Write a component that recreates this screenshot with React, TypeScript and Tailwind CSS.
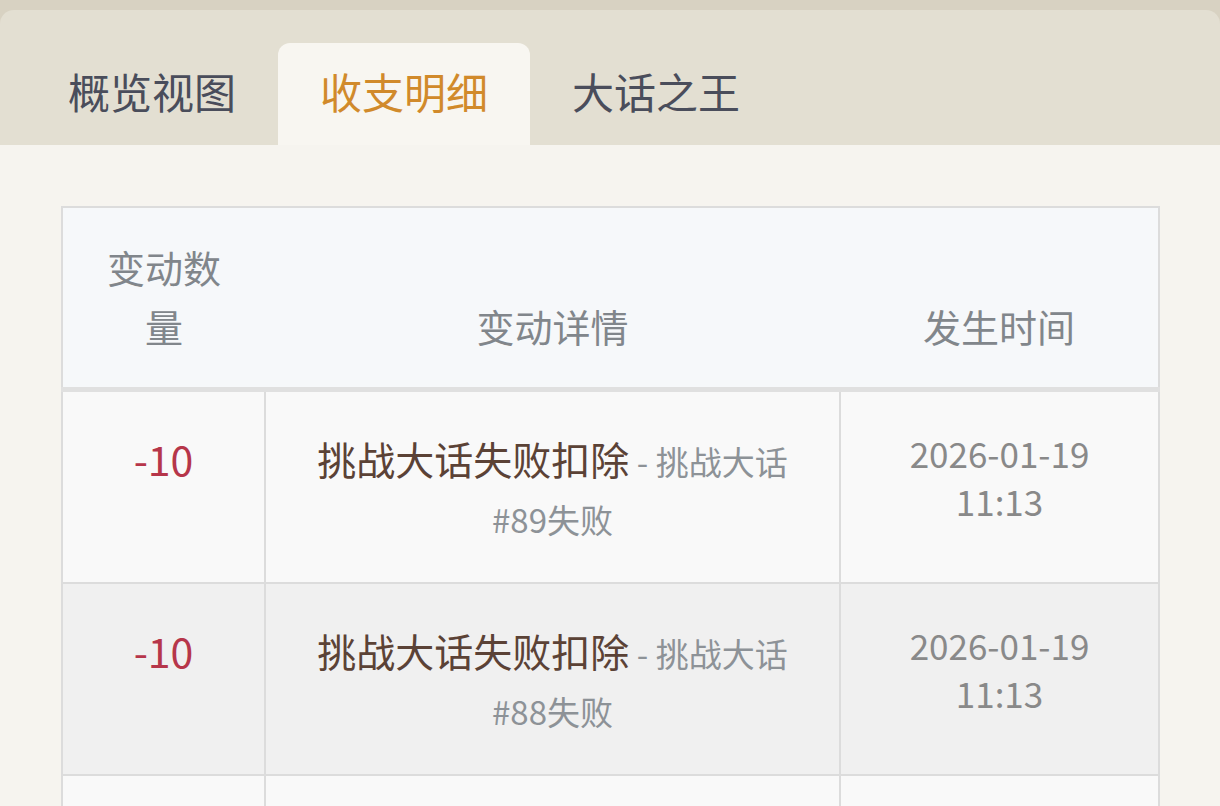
import React from "react";

const rows = [
  { amount: "-10", title: "挑战大话失败扣除", note: "挑战大话 #89失败", date: "2026-01-19", time: "11:13" },
  { amount: "-10", title: "挑战大话失败扣除", note: "挑战大话 #88失败", date: "2026-01-19", time: "11:13" },
  { amount: "-10", title: "挑战大话失败扣除", note: "挑战大话 #87失败", date: "2026-01-19", time: "11:13" },
];

const tabs = ["概览视图", "收支明细", "大话之王"];

export default function App() {
  return (
    <div
      className="h-[806px] w-[1220px] overflow-hidden bg-[#d8d2c2] pt-[10px]"
      style={{ fontFamily: '"Noto Sans CJK SC", "Noto Sans", sans-serif' }}
    >
      <div className="rounded-t-[14px] bg-[#e3dfd2] h-full flex flex-col">
        {/* tabs */}
        <div className="flex pl-[26px] pt-[33px] h-[135px] shrink-0">
          {tabs.map((t, i) => (
            <div
              key={t}
              className={
                i === 1
                  ? "w-[252px] flex items-center justify-center rounded-t-[12px] bg-[#f8f6f1] text-[42px] text-[#d18a2b] pb-[8px]"
                  : "w-[252px] flex items-center justify-center text-[42px] text-[#4a4d5b] pb-[8px]"
              }
            >
              {t}
            </div>
          ))}
        </div>

        {/* content */}
        <div className="flex-1 bg-[#f6f4ef] px-[61px] pt-[61px]">
          <table className="w-[1097px] border-collapse table-fixed border-2 border-[#dcdcdc]">
            <colgroup>
              <col className="w-[203px]" />
              <col className="w-[575px]" />
              <col className="w-[319px]" />
            </colgroup>
            <thead>
              <tr className="bg-[#f6f8fa] border-b-[5px] border-[#e0e0e0] h-[182px]">
                <th className="align-bottom px-[38px] pb-[32px] text-[38px] leading-[59px] font-normal text-[#81868b]">
                  变动数量
                </th>
                <th className="align-bottom px-[38px] pb-[32px] text-[38px] leading-[59px] font-normal text-[#81868b]">
                  变动详情
                </th>
                <th className="align-bottom px-[38px] pb-[32px] text-[38px] leading-[59px] font-normal text-[#81868b]">
                  发生时间
                </th>
              </tr>
            </thead>
            <tbody>
              {rows.map((r, i) => (
                <tr key={i} className={i % 2 === 1 ? "bg-[#f0f0f0]" : "bg-[#f9f9f9]"}>
                  <td className="border-2 border-[#dcdcdc] align-top text-center px-[30px] py-[37px] text-[41px] leading-[58px] text-[#b6364a]">
                    {r.amount}
                  </td>
                  <td className="border-2 border-[#dcdcdc] align-top text-center px-[36px] py-[37px] text-[39px] leading-[58px]">
                    <span className="text-[#5b4236]">{r.title}</span>
                    <span className="text-[33px] leading-none text-[#8d9297]">
                      {" "}-{" "}{r.note}
                    </span>
                  </td>
                  <td className="border-2 border-[#dcdcdc] align-top text-center px-[20px] py-[37px] text-[35px] leading-[48px] text-[#898989]">
                    <div>{r.date}</div>
                    <div>{r.time}</div>
                  </td>
                </tr>
              ))}
            </tbody>
          </table>
        </div>
      </div>
    </div>
  );
}
